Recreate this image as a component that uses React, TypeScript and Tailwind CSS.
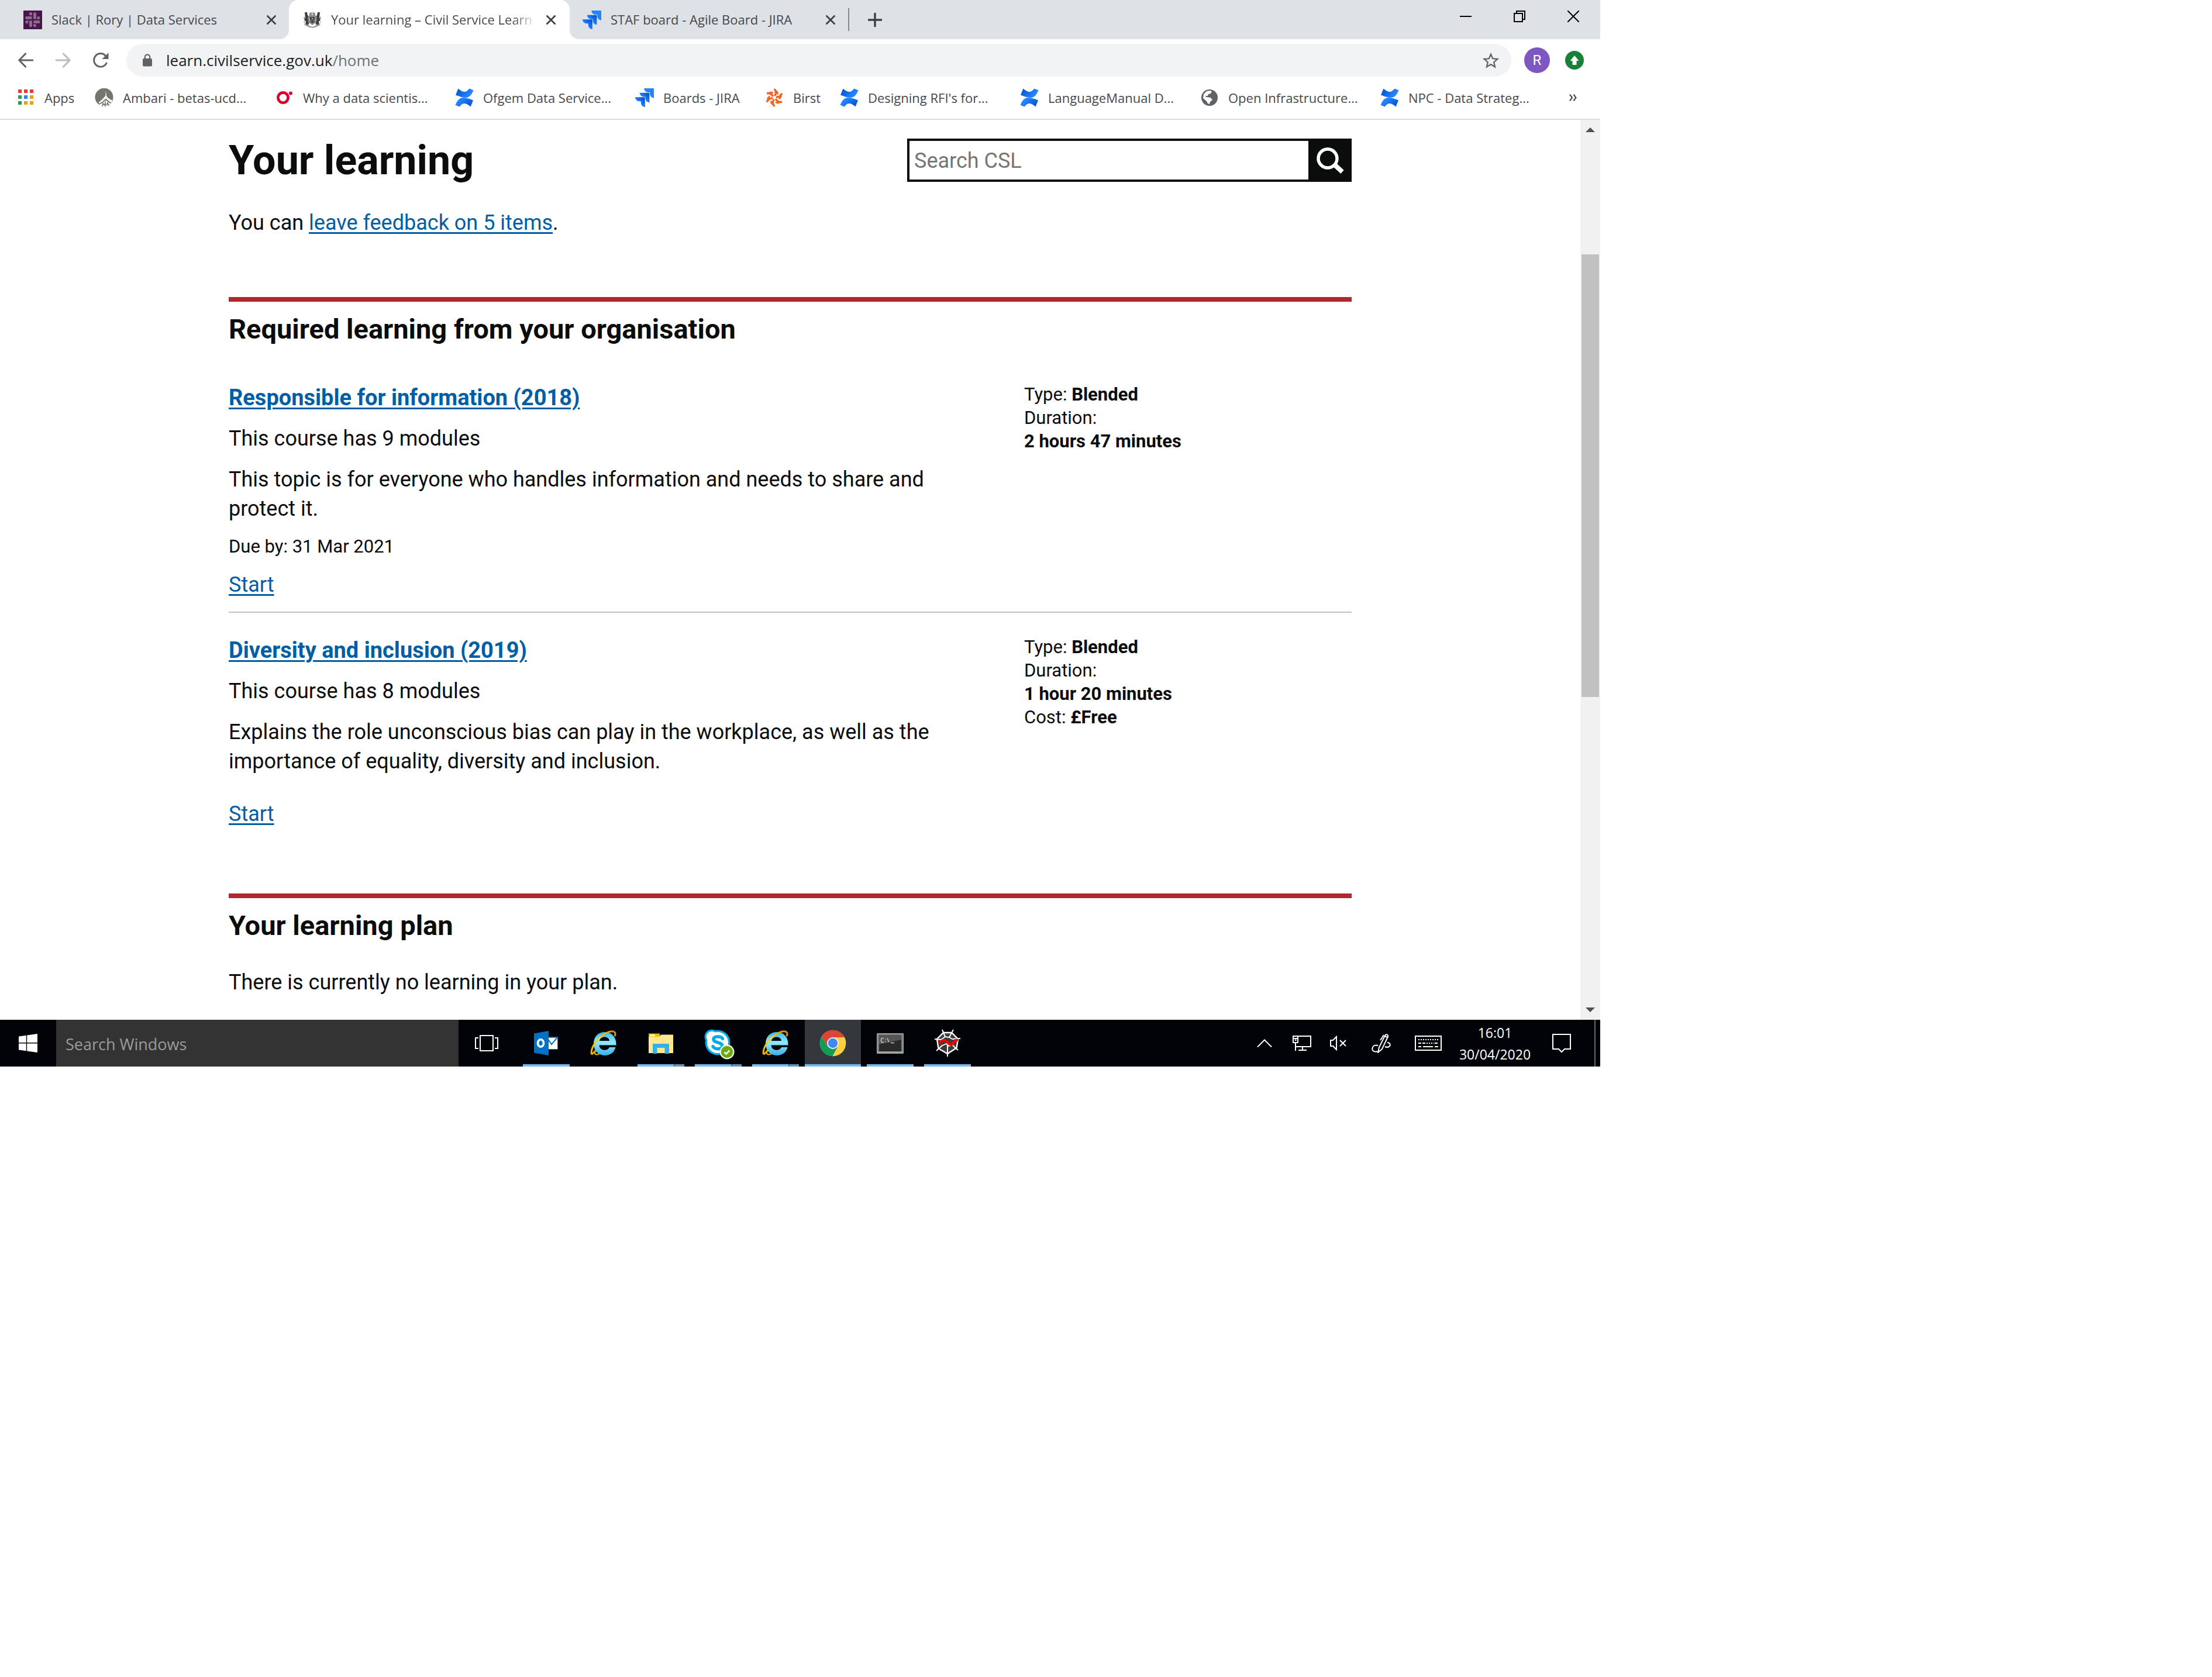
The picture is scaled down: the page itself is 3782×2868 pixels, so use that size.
import React, { useId } from "react";
import type { ReactNode } from "react";

/* ---------- favicons ---------- */

function SlackIcon() {
  return (
    <svg viewBox="0 0 32 32" className="size-8 shrink-0" aria-hidden="true">
      <rect width="32" height="32" fill="#4a154b" />
      <g fill="#8f6a90">
        <rect x="17" y="3" width="5" height="12" rx="2.4" />
        <path d="M15 8.2h-2.6a2.6 2.6 0 1 1 2.6-2.6z" />
        <rect x="3" y="10" width="12" height="5" rx="2.4" />
        <path d="M23.3 15v-2.4a2.5 2.5 0 1 1 2.5 2.4z" />
        <rect x="10" y="17" width="5" height="11.5" rx="2.4" />
        <rect x="17" y="17" width="11.500" height="5" rx="2.4" />
        <path d="M17 23.300h2.400a2.500 2.500 0 1 1-2.400 2.500z" />
        <path d="M8.500 17v2.500A2.600 2.600 0 1 1 6 17z" />
      </g>
    </svg>
  );
}

function CrestIcon() {
  return (
    <svg viewBox="0 0 32 32" className="size-8 shrink-0" aria-hidden="true">
      <g fill="#3f3f3f">
        <path d="M3 3h4l1 5 3 4v8l-2 5-5-1 1-5-3-3 2-4z" />
        <path d="M29 3h-4l-1 5-3 4v8l2 5 5-1-1-5 3-3-2-4z" />
      </g>
      <path d="M11 5l2-2 3 1 3-1 2 2v3l3 4-1 8-7 5-7-5-1-8 3-4z" fill="#8a8a8a" />
      <path d="M12 11h8v8l-4 3-4-3z" fill="#444" />
      <path d="M14.500 5h3v3h-3zM11 14h1v4h-1zM20 14h1v4h-1zM15 13h2v2h-2zM13 17h2v1h-2zM17 17h2v1h-2z" fill="#c9c9c9" />
      <path d="M2 22l7 3 7 3 7-3 7-3-1 3-6 3-7 2-7-2-6-3z" fill="#9b9b9b" />
      <path d="M1 12l2-2v5zM31 12l-2-2v5zM1 18l2 1v3zM31 18l-2 1v3z" fill="#8a8a8a" />
    </svg>
  );
}

function JiraIcon() {
  const id = useId();
  return (
    <svg viewBox="0 0 24 24" className="size-8 shrink-0" aria-hidden="true">
      <defs>
        <linearGradient id={id} x1="1" y1="0" x2="0.400" y2="0.600">
          <stop offset="0.150" stopColor="#0052cc" />
          <stop offset="1" stopColor="#2684ff" />
        </linearGradient>
      </defs>
      <path
        fill="#2684ff"
        d="M23.013 0H11.455a5.215 5.215 0 0 0 5.215 5.215h2.129v2.057A5.215 5.215 0 0 0 24 12.483V1.005A1.001 1.001 0 0 0 23.013 0Z"
      />
      <path
        fill={`url(#${id})`}
        d="M17.294 5.757H5.736a5.215 5.215 0 0 0 5.215 5.214h2.129v2.058a5.218 5.218 0 0 0 5.215 5.214V6.758a1.001 1.001 0 0 0-1.001-1.001z"
      />
      <path
        fill={`url(#${id})`}
        d="M11.571 11.513H0a5.218 5.218 0 0 0 5.232 5.215h2.130v2.057A5.215 5.215 0 0 0 12.575 24V12.518a1.005 1.005 0 0 0-1.005-1.005z"
      />
    </svg>
  );
}

function ConfluenceIcon() {
  const id = useId();
  const half = "M5.500 .5C10 4.500 13 6 16.500 6 20 6 22 3 24.500 .5L31.500 3.500C29 9 26 16 18 16 12 16 6 13.500 1 11.500Z";
  return (
    <svg viewBox="0 0 32 32" className="size-8 shrink-0" aria-hidden="true">
      <defs>
        <linearGradient id={id} x1="0" y1="0.200" x2="0.800" y2="0.600">
          <stop offset="0" stopColor="#0052cc" />
          <stop offset="1" stopColor="#2684ff" />
        </linearGradient>
      </defs>
      <path fill={`url(#${id})`} d={half} />
      <path fill={`url(#${id})`} d={half} transform="rotate(180 16 16)" />
    </svg>
  );
}

function AppsIcon() {
  const colours = ["#f6352e", "#f6352e", "#f6352e", "#2b9b52", "#1e88f7", "#f1a100", "#2b9b52", "#f1a100", "#f1a100"];
  return (
    <svg viewBox="0 0 32 32" className="size-8 shrink-0" aria-hidden="true">
      {colours.map((c, i) => (
        <rect key={i} x={3 + (i % 3) * 10} y={2 + Math.floor(i / 3) * 10} width="6" height="6" fill={c} />
      ))}
    </svg>
  );
}

function AmbariIcon() {
  return (
    <svg viewBox="0 0 32 32" className="size-8 shrink-0" aria-hidden="true">
      <path d="M8 28.500A15.500 15.500 0 1 1 23 29L31 22 19 14.500 8 24z" fill="#75756f" />
      <path d="M19 3l1 11 3 3 4 5-8-4-8 4 4-5 3-3z" fill="#f2f2ee" />
      <g fill="none" stroke="#f2f2ee" strokeWidth="2">
        <path d="M19 13c-3 5-7 8-12 12M19 13c2 4 6 7 10 8" />
      </g>
      <g fill="none" stroke="#75756f" strokeWidth="1.800">
        <path d="M8 27c4-2 8-5 11-8 3 3 6 5 9 6M13 31l1-5 3 3M18 23v8M20 29l2-4 2 5" />
      </g>
    </svg>
  );
}

function RingIcon() {
  return (
    <svg viewBox="0 0 32 32" className="size-8 shrink-0" aria-hidden="true">
      <circle cx="14" cy="16" r="8.600" fill="none" stroke="#d9002f" strokeWidth="4.600" />
      <circle cx="27" cy="8.500" r="2.900" fill="#d9002f" />
    </svg>
  );
}

function BirstIcon() {
  return (
    <svg viewBox="0 0 32 32" className="size-8 shrink-0" aria-hidden="true">
      <g fill="none" stroke="#f26322" strokeWidth="3.400">
        {[0, 60, 120, 180, 240, 300].map((a) => (
          <path key={a} d="M16.500 13C19 10 19.500 6 16 1" transform={`rotate(${a} 16 16)`} />
        ))}
        {[30, 90, 150, 210, 270, 330].map((a) => (
          <path key={a} d="M18 8.500C17 6 15 4.500 13 4.500" strokeWidth="2.600" transform={`rotate(${a} 16 16)`} />
        ))}
      </g>
    </svg>
  );
}

function GlobeIcon() {
  return (
    <svg viewBox="0 0 32 32" className="size-8 shrink-0" aria-hidden="true">
      <circle cx="16" cy="16" r="14" fill="#5f6368" />
      <path
        d="M5 17l6 5 2 4 3 1 1-4 4-3-3-4-7-1-3-2 5 0 1-3 4-1 2-4-4-1-5 1-5 5z"
        fill="#fff"
      />
      <path d="M22 7l-2 3 1 3 4 1 2 3c0-5-1-7-5-10z" fill="#5f6368" />
    </svg>
  );
}

function CloseIcon() {
  return (
    <svg viewBox="0 0 16 16" className="size-4" stroke="#3c4043" strokeWidth="2.800" aria-hidden="true">
      <path d="M.5 .5l15 15M15.500 .5l-15 15" />
    </svg>
  );
}

/* ---------- browser frame ---------- */

function Tab({ icon, title, active, className }: { icon: ReactNode; title: string; active?: boolean; className: string }) {
  return (
    <div
      role="tab"
      aria-selected={!!active}
      className={`relative flex h-full items-center gap-4 ${active ? "rounded-t-2xl bg-white" : ""} ${className}`}
    >
      {active && (
        <>
          <svg viewBox="0 0 16 16" className="absolute right-full bottom-0 size-4" aria-hidden="true">
            <path d="M16 0v16H0A16 16 0 0 0 16 0z" fill="#fff" />
          </svg>
          <svg viewBox="0 0 16 16" className="absolute bottom-0 left-full size-4" aria-hidden="true">
            <path d="M0 0v16h16A16 16 0 0 1 0 0z" fill="#fff" />
          </svg>
        </>
      )}
      {icon}
      <span
        className={`min-w-0 flex-1 overflow-hidden whitespace-nowrap ${
          active ? "[mask-image:linear-gradient(to_right,black_88%,transparent)]" : ""
        }`}
      >
        {title}
      </span>
      <button type="button" aria-label={`Close ${title}`} className="shrink-0">
        <CloseIcon />
      </button>
    </div>
  );
}

function TabStrip() {
  return (
    <div className="flex h-[67px] bg-[#dee1e6] text-[22px] text-[#45494d]">
      <div role="tablist" className="flex">
        <Tab icon={<SlackIcon />} title="Slack | Rory | Data Services" className="w-[494px] pr-[22px] pl-10" />
        <Tab icon={<CrestIcon />} title="Your learning – Civil Service Learn" active className="w-[480px] px-6" />
        <Tab icon={<JiraIcon />} title="STAF board - Agile Board - JIRA" className="w-[476px] px-[22px]" />
      </div>
      <div className="my-[14px] w-0.5 bg-[#85888d]" />
      <button type="button" aria-label="New tab" className="grid w-[88px] place-items-center">
        <svg viewBox="0 0 24 24" className="size-6" stroke="#3c4043" strokeWidth="3.400" aria-hidden="true">
          <path d="M12 0v24M0 12h24" />
        </svg>
      </button>
      <div className="ml-auto flex h-14">
        <button type="button" aria-label="Minimise" className="grid w-[92px] place-items-center">
          <svg viewBox="0 0 20 20" className="size-5" stroke="#000" strokeWidth="2" aria-hidden="true">
            <path d="M0 10h20" />
          </svg>
        </button>
        <button type="button" aria-label="Restore" className="grid w-[92px] place-items-center">
          <svg viewBox="0 0 20 20" className="size-5" fill="none" stroke="#000" strokeWidth="2" aria-hidden="true">
            <path d="M1 5h14v14H1zM5 4V1h14v14h-3" />
          </svg>
        </button>
        <button type="button" aria-label="Close window" className="grid w-[92px] place-items-center">
          <svg viewBox="0 0 20 20" className="size-5" stroke="#000" strokeWidth="2" aria-hidden="true">
            <path d="M0 0l20 20M20 0L0 20" />
          </svg>
        </button>
      </div>
    </div>
  );
}

function Toolbar() {
  return (
    <div className="flex items-center pt-2 pr-7 pl-3">
      <button type="button" aria-label="Back" className="grid w-16 place-items-center">
        <svg viewBox="0 0 26 26" className="size-[26px]" fill="none" stroke="#5f6368" strokeWidth="3" aria-hidden="true">
          <path d="M26 13H2M13.500 1L1.800 13l11.700 12" />
        </svg>
      </button>
      <button type="button" aria-label="Forward" className="grid w-16 place-items-center">
        <svg viewBox="0 0 26 26" className="size-[26px]" fill="none" stroke="#babcbe" strokeWidth="3" aria-hidden="true">
          <path d="M0 13h24M12.500 1l11.700 12-11.700 12" />
        </svg>
      </button>
      <button type="button" aria-label="Reload" className="grid w-16 place-items-center">
        <svg viewBox="0 0 28 28" className="size-7" aria-hidden="true">
          <path d="M24.500 18A11.300 11.300 0 1 1 22.500 6.500" fill="none" stroke="#5f6368" strokeWidth="3" />
          <path d="M27.500 1v11H16.500z" fill="#5f6368" />
        </svg>
      </button>
      <div className="ml-3 flex h-14 flex-1 items-center rounded-full bg-[#f1f3f4] pr-5 pl-7">
        <svg viewBox="0 0 16 22" className="h-[22px] w-4" aria-hidden="true">
          <rect y="8" width="16" height="13.500" rx="2" fill="#5f6368" />
          <path d="M3.800 9V5.500a4.200 4.200 0 0 1 8.400 0V9" fill="none" stroke="#5f6368" strokeWidth="2.200" />
        </svg>
        <div className="ml-6 flex-1 text-[26px] text-[#202124]">
          learn.civilservice.gov.uk<span className="text-[#6d7175]">/home</span>
        </div>
        <button type="button" aria-label="Bookmark this page" className="grid size-8 place-items-center">
          <svg viewBox="0 0 24 24" className="size-[34px]" aria-hidden="true">
            <path
              fill="#5f6368"
              d="M22 9.240l-7.190-.620L12 2 9.190 8.630 2 9.240l5.460 4.730L5.820 21 12 17.270 18.180 21l-1.630-7.030L22 9.240zM12 15.400l-3.760 2.270 1-4.280-3.320-2.880 4.380-.380L12 6.100l1.710 4.040 4.380.380-3.320 2.880 1 4.280L12 15.400z"
            />
          </svg>
        </button>
      </div>
      <button
        type="button"
        aria-label="Profile"
        className="ml-[22px] grid size-11 place-items-center rounded-full bg-[#7e57c2] font-['Roboto',sans-serif] text-[24px] text-white"
      >
        R
      </button>
      <button type="button" aria-label="Update" className="ml-[26px] grid size-8 place-items-center rounded-full bg-[#188038]">
        <svg viewBox="0 0 16 16" className="size-4" fill="#fff" aria-hidden="true">
          <path d="M8 0l7.500 9H11.500v7h-7V9H.5z" />
        </svg>
      </button>
    </div>
  );
}

const bookmarks: { label: string; icon: ReactNode; width: string }[] = [
  { label: "Apps", icon: <AppsIcon />, width: "w-[134px]" },
  { label: "Ambari - betas-ucd...", icon: <AmbariIcon />, width: "w-[308px]" },
  { label: "Why a data scientis...", icon: <RingIcon />, width: "w-[308px]" },
  { label: "Ofgem Data Service...", icon: <ConfluenceIcon />, width: "w-[308px]" },
  { label: "Boards - JIRA", icon: <JiraIcon />, width: "w-[222px]" },
  { label: "Birst", icon: <BirstIcon />, width: "w-[128px]" },
  { label: "Designing RFI's for...", icon: <ConfluenceIcon />, width: "w-[308px]" },
  { label: "LanguageManual D...", icon: <ConfluenceIcon />, width: "w-[308px]" },
  { label: "Open Infrastructure...", icon: <GlobeIcon />, width: "w-[308px]" },
  { label: "NPC - Data Strateg...", icon: <ConfluenceIcon />, width: "w-[308px]" },
];

function BookmarksBar() {
  return (
    <nav aria-label="Bookmarks" className="flex h-[74px] items-center border-b-2 border-[#dadce0] pr-10 pl-7 text-[22px] text-[#45494d]">
      {bookmarks.map((b) => (
        <a key={b.label} href="#" className={`flex shrink-0 items-center gap-4 whitespace-nowrap ${b.width}`}>
          {b.icon}
          {b.label}
        </a>
      ))}
      <button type="button" aria-label="More bookmarks" className="ml-auto">
        <svg viewBox="0 0 13 12" className="h-3 w-[13px]" fill="none" stroke="#4a4e52" strokeWidth="2.200" aria-hidden="true">
          <path d="M1 .5L5 6l-4 5.500M7.500 .5l4 5.500-4 5.500" />
        </svg>
      </button>
    </nav>
  );
}

/* ---------- page ---------- */

const linkClass = "text-[#005ea5] underline decoration-[3px] underline-offset-[4px]";

function SectionHeading({ children }: { children: ReactNode }) {
  return (
    <h2 className="border-t-8 border-[#b0272d] pt-[17px] text-[47px] leading-[60px] font-bold">{children}</h2>
  );
}

interface Course {
  title: string;
  modules: string;
  summary: string;
  due?: string;
  duration: string;
  cost?: string;
}

const courses: Course[] = [
  {
    title: "Responsible for information (2018)",
    modules: "This course has 9 modules",
    summary: "This topic is for everyone who handles information and needs to share and protect it.",
    due: "Due by: 31 Mar 2021",
    duration: "2 hours 47 minutes",
  },
  {
    title: "Diversity and inclusion (2019)",
    modules: "This course has 8 modules",
    summary:
      "Explains the role unconscious bias can play in the workplace, as well as the importance of equality, diversity and inclusion.",
    duration: "1 hour 20 minutes",
    cost: "£Free",
  },
];

function Strong({ children }: { children: ReactNode }) {
  return <strong className="leading-none font-bold">{children}</strong>;
}

function CourseItem({ course }: { course: Course }) {
  return (
    <li className="grid grid-cols-[17fr_7fr] border-b-2 border-[#bfc1c3] pt-[39px] pb-[21px] first:pt-0 last:border-0 last:pb-0">
      <div className="flex flex-col items-start gap-5 pr-[90px]">
        <h3 className="text-[38px] font-bold">
          <a href="#" className={linkClass}>
            {course.title}
          </a>
        </h3>
        <p>{course.modules}</p>
        <p>{course.summary}</p>
        {course.due ? <p className="text-[31px] leading-10">{course.due}</p> : <div className="h-0" />}
        <a href="#" className={linkClass}>
          Start
        </a>
      </div>
      <dl className="text-[31px] leading-10">
        <div>
          <dt className="inline">Type: </dt>
          <dd className="inline">
            <Strong>Blended</Strong>
          </dd>
        </div>
        <dt>Duration:</dt>
        <dd>
          <Strong>{course.duration}</Strong>
        </dd>
        {course.cost && (
          <div>
            <dt className="inline">Cost: </dt>
            <dd className="inline">
              <Strong>{course.cost}</Strong>
            </dd>
          </div>
        )}
      </dl>
    </li>
  );
}

function LearningPage() {
  return (
    <main className="min-w-0 flex-1 font-['Roboto',sans-serif] text-[36px] leading-[50px] text-[#0b0c0c]">
      <div className="mx-auto max-w-[1920px] pt-[29px] pb-[39px]">
        <div className="flex items-center justify-between">
          <h1 className="text-[70px] leading-[80px] font-bold">Your learning</h1>
          <form className="flex h-[74px] w-[760px]" onSubmit={(e) => e.preventDefault()}>
            <input
              type="search"
              aria-label="Search CSL"
              placeholder="Search CSL"
              className="min-w-0 flex-1 border-4 border-r-0 border-[#0b0c0c] bg-white px-2 pt-0.5 outline-none placeholder:text-[#757575] placeholder:opacity-100"
            />
            <button type="submit" aria-label="Search" className="grid w-[74px] place-items-center bg-[#0b0c0c]">
              <svg viewBox="0 0 48 46" className="h-[46px] w-12" fill="none" stroke="#fff" aria-hidden="true">
                <circle cx="20" cy="20" r="16" strokeWidth="5.500" />
                <path d="M31 30l14 13" strokeWidth="8" />
              </svg>
            </button>
          </form>
        </div>
        <p className="mt-[42px]">
          You can{" "}
          <a href="#" className={linkClass}>
            leave feedback on 5 items
          </a>
          .
        </p>
        <section className="mt-[102px]">
          <SectionHeading>Required learning from your organisation</SectionHeading>
          <ul className="mt-[62px]">
            {courses.map((c) => (
              <CourseItem key={c.title} course={c} />
            ))}
          </ul>
        </section>
        <section className="mt-[111px]">
          <SectionHeading>Your learning plan</SectionHeading>
          <p className="mt-[42px]">There is currently no learning in your plan.</p>
        </section>
      </div>
    </main>
  );
}

function ScrollBar() {
  return (
    <div className="flex w-[34px] flex-col bg-[#f1f1f1] px-0.5" aria-hidden="true">
      <div className="grid h-[34px] place-items-center">
        <svg viewBox="0 0 16 8" className="h-2 w-4" fill="#505050">
          <path d="M8 0l8 8H0z" />
        </svg>
      </div>
      <div className="flex-[196]" />
      <div className="flex-[757] bg-[#c1c1c1]" />
      <div className="flex-[518]" />
      <div className="grid h-[34px] place-items-center">
        <svg viewBox="0 0 16 8" className="h-2 w-4" fill="#505050">
          <path d="M8 8l8-8H0z" />
        </svg>
      </div>
    </div>
  );
}

/* ---------- taskbar ---------- */

function OutlookIcon() {
  return (
    <svg viewBox="0 0 48 48" className="size-12" aria-hidden="true">
      <rect x="24" y="13" width="20" height="22" fill="#0072c6" />
      <path d="M26 15h17v19H26z" fill="#fff" />
      <path d="M26 16l7 10 10-12" fill="none" stroke="#0072c6" strokeWidth="2" />
      <path d="M3 7.500L28 3v42L3 40.500z" fill="#0072c6" />
      <ellipse cx="14.500" cy="24" rx="5" ry="6.200" fill="none" stroke="#fff" strokeWidth="3.600" />
    </svg>
  );
}

function ExplorerEIcon() {
  const id = useId();
  return (
    <svg viewBox="0 0 48 48" className="size-12" aria-hidden="true">
      <defs>
        <linearGradient id={id} x1="0" y1="0" x2="0" y2="1">
          <stop offset="0" stopColor="#3fb4e8" />
          <stop offset="0.450" stopColor="#8eeafd" />
          <stop offset="1" stopColor="#3aaee6" />
        </linearGradient>
        <linearGradient id={`${id}g`} x1="0" y1="1" x2="1" y2="0">
          <stop offset="0" stopColor="#e8b400" />
          <stop offset="0.500" stopColor="#ffd21e" />
          <stop offset="1" stopColor="#c99000" />
        </linearGradient>
      </defs>
      <path
        fill={`url(#${id})`}
        fillRule="evenodd"
        d="M26 5C14.500 5 7 13.500 7 25s8 20 19 20c9.500 0 16.500-5.500 18.500-14H34c-1.500 3-4 4.800-8 4.800-5.500 0-9-3-9.500-8.300H45.500C46 14 38.500 5 26 5zM17 20c1-4 4-6.500 8.700-6.500S33.500 16 34 20z"
      />
      <path
        d="M10 37C4 44 2 45 3.500 36.500 5.500 27 15 14 27 7.500 38 1.500 46 3 43.500 11"
        fill="none"
        stroke={`url(#${id}g)`}
        strokeWidth="3"
        strokeLinecap="round"
      />
      <path d="M10 37C7 43 11 45 17 42" fill="none" stroke="#d9a300" strokeWidth="2.400" />
    </svg>
  );
}

function FolderIcon() {
  return (
    <svg viewBox="0 0 48 48" className="size-12" aria-hidden="true">
      <path d="M3 7.500h19V14H3z" fill="#f5b800" />
      <path d="M3 13h18l3-3.500h21V41H3z" fill="#ffe793" />
      <rect x="5" y="9.500" width="9" height="2.600" fill="#fff" />
      <path d="M10 25h28v17h-7.500V32h-13v10H10z" fill="#35b0e8" />
    </svg>
  );
}

function SkypeIcon() {
  return (
    <svg viewBox="0 0 56 56" className="size-14" aria-hidden="true">
      <g fill="#00a9ec">
        <circle cx="27" cy="27" r="21.500" />
        <circle cx="17" cy="17" r="12.500" />
        <circle cx="36" cy="36" r="12" />
      </g>
      <g fill="#fff">
        <circle cx="27" cy="27" r="18" />
        <circle cx="17" cy="17" r="9.300" />
      </g>
      <path
        d="M35.500 20.500c-2-4.500-15-5.500-15.500.8-.300 6.700 15.500 4.500 15 11.700-.500 6.500-13.500 6-16 .5"
        fill="none"
        stroke="#00a9ec"
        strokeWidth="5.400"
        strokeLinecap="round"
      />
      <circle cx="43" cy="43" r="12.500" fill="#f4f8ec" />
      <circle cx="43" cy="43" r="10.200" fill="#6bab0b" />
      <path d="M38.500 43.500l3.200 3 5.500-6" fill="none" stroke="#fff" strokeWidth="2.600" />
    </svg>
  );
}

function ChromeIcon() {
  return (
    <svg viewBox="0 0 48 48" className="size-12" aria-hidden="true">
      <circle cx="24" cy="24" r="22.300" fill="#ffcd40" />
      <path d="M4.700 12.850A22.300 22.300 0 0 1 43.500 13.200L44 14H24L15 29.200z" fill="#db4437" />
      <path d="M4.700 12.850A22.300 22.300 0 0 0 24 46.300l9-17.300L24 34l-9.200-5.300z" fill="#0f9d58" />
      <path d="M24 14h19.900l.700 2A22.300 22.300 0 0 1 23.500 46.300l9.200-17.100z" fill="#ffcd40" />
      <circle cx="24" cy="24" r="10" fill="#f4f4f4" />
      <circle cx="24" cy="24" r="8.200" fill="#4285f4" />
    </svg>
  );
}

function TerminalIcon() {
  return (
    <svg viewBox="0 0 48 48" className="size-12" aria-hidden="true">
      <rect x="1" y="7" width="46" height="35" rx="1.500" fill="#a4a4a4" />
      <rect x="2.500" y="8.500" width="43" height="30" fill="#7c7c7c" />
      <rect x="5" y="10" width="38" height="28" fill="#2a2a2a" />
      <path d="M5 10h38v8L5 26z" fill="#555" />
      <path
        d="M13 15.500h-3l-1.500 1.500v4l1.500 1.500h3M16 17v1M16 21v1M19 15.500l3 7M25 23.500h6"
        fill="none"
        stroke="#c8c8c8"
        strokeWidth="1.400"
      />
      <rect x="38" y="39.500" width="3" height="1.500" fill="#3fb8e8" />
    </svg>
  );
}

function SpiderIcon() {
  return (
    <svg viewBox="0 0 48 48" className="size-12" aria-hidden="true">
      <path d="M17 6h15L42 18l-2.500 13L24 41 8.500 31 6 18z" fill="#3b3b3b" />
      <g fill="none" stroke="#fff" strokeWidth="2">
        <path d="M17 6h14L42 17l-2.500 15L24 42 8.500 33 6 17z" strokeWidth="2.400" />
        <path d="M20 13l7 1 5 3M13 18l7-5M13 29l9-4 4 4 9-3" strokeWidth="1.800" />
        <path d="M27 14L34 1M20 13L15 1M32 17l14-1M13 18L2 17M32 27l10 9M15 28L5 37M24 27v20" />
      </g>
      <path d="M9 25C14 19 19 17 24 22c5 6 8 6 10 1 2-3.500 4-5 8-4" fill="none" stroke="#f00000" strokeWidth="4.400" />
    </svg>
  );
}

type Underline = "none" | "single" | "stacked" | "full";

const apps: { name: string; icon: ReactNode; underline: Underline }[] = [
  { name: "Outlook", icon: <OutlookIcon />, underline: "single" },
  { name: "Internet Explorer", icon: <ExplorerEIcon />, underline: "none" },
  { name: "File Explorer", icon: <FolderIcon />, underline: "stacked" },
  { name: "Skype for Business", icon: <SkypeIcon />, underline: "stacked" },
  { name: "Internet Explorer windows", icon: <ExplorerEIcon />, underline: "stacked" },
  { name: "Google Chrome", icon: <ChromeIcon />, underline: "full" },
  { name: "Command Prompt", icon: <TerminalIcon />, underline: "single" },
  { name: "Spyder", icon: <SpiderIcon />, underline: "single" },
];

function AppButton({ name, icon, underline }: { name: string; icon: ReactNode; underline: Underline }) {
  return (
    <button
      type="button"
      aria-label={name}
      className={`relative grid w-24 place-items-center ${underline === "full" ? "bg-[#34373c]" : ""}`}
    >
      {icon}
      {underline === "full" && <span className="absolute inset-x-0 bottom-0 h-1 bg-[#76b9ed]" />}
      {underline === "single" && <span className="absolute inset-x-2 bottom-0 h-1 bg-[#76b9ed]" />}
      {underline === "stacked" && (
        <span className="absolute inset-x-2 bottom-0 flex h-1">
          <span className="flex-1 bg-[#76b9ed]" />
          <span className="w-0.5 bg-[#466f8e]" />
          <span className="w-4 bg-[#5e94be]" />
        </span>
      )}
    </button>
  );
}

function Tray() {
  return (
    <div className="ml-auto flex text-white">
      <button type="button" aria-label="Show hidden icons" className="grid w-16 place-items-center">
        <svg viewBox="0 0 26 14" className="h-[14px] w-[26px]" fill="none" stroke="#fff" strokeWidth="2" aria-hidden="true">
          <path d="M1 13.500L13 1.500l12 12" />
        </svg>
      </button>
      <button type="button" aria-label="Network" className="grid w-16 place-items-center">
        <svg viewBox="0 0 32 28" className="h-7 w-8" fill="none" stroke="#fff" strokeWidth="2" aria-hidden="true">
          <path d="M9 2h22v18H6M17 20v6M10 26h14M5 13v14M1 2h8v11H1zM1 6h8" />
          <path d="M4 7.500h2.500V10H4z" fill="#fff" stroke="none" />
        </svg>
      </button>
      <button type="button" aria-label="Muted" className="grid w-[60px] place-items-center">
        <svg viewBox="0 0 30 26" className="h-[26px] w-[30px]" fill="none" stroke="#fff" strokeWidth="2" aria-hidden="true">
          <path d="M2 8h4l6-6v22l-6-6H2zM18 8l10 10M28 8L18 18" />
        </svg>
      </button>
      <button type="button" aria-label="Ink workspace" className="grid w-[88px] place-items-center">
        <svg viewBox="0 0 34 34" className="size-[34px]" fill="none" stroke="#fff" strokeWidth="2" aria-hidden="true">
          <path d="M11 33l2-9L23 4c1.500-3 6-2 5 2L18 27zM23 5l4 2M21 3l-6 9M10 31C3 33 0 29 2 24c1-3 5-4 9-3M27 16c5 0 6 5 3 7-2 1-5 1-7 0" />
        </svg>
      </button>
      <button type="button" aria-label="Touch keyboard" className="grid w-[72px] place-items-center">
        <svg viewBox="0 0 46 28" className="h-7 w-[46px]" fill="none" stroke="#fff" strokeWidth="2" aria-hidden="true">
          <path d="M1 2h44v24H1z" />
          <path d="M6 8h34" strokeDasharray="2 2" />
          <path d="M6 14h5M13 14h20M34 14h6" strokeDasharray="5 2 2 2 2 2 2 2 2 2 2 2 2 7" />
          <path d="M6 20h5M14 20h17M34 20h6" />
        </svg>
      </button>
      <button type="button" className="w-[156px] self-center pt-0.5 text-center text-[23px] leading-[37px]">
        <span className="block">16:01</span>
        <span className="block">30/04/2020</span>
      </button>
      <button type="button" aria-label="Notifications" className="grid w-[72px] place-items-center">
        <svg viewBox="0 0 32 34" className="h-[34px] w-8" fill="none" stroke="#fff" strokeWidth="2" aria-hidden="true">
          <path d="M1 2h30v25H21l-5 5-5-5H1z" />
        </svg>
      </button>
      <div className="mr-2 ml-5 w-0.5 bg-[#676869]" />
    </div>
  );
}

function Taskbar() {
  return (
    <footer className="flex h-20 bg-[#010308]">
      <button type="button" aria-label="Start" className="grid w-24 place-items-center">
        <svg viewBox="0 0 32 32" className="size-8" fill="#fff" aria-hidden="true">
          <path d="M0 4.600L12.800 2.700V15H0zM14.200 2.500L32 0v15H14.200zM0 16.600h12.800v12.600L0 27.400zM14.200 16.600H32V32l-17.800-2.500z" />
        </svg>
      </button>
      <input
        type="text"
        aria-label="Search Windows"
        placeholder="Search Windows"
        className="w-[688px] min-w-0 bg-[#333333] px-4 pt-1 text-[27px] text-white outline-none placeholder:text-[#9b9b9b] placeholder:opacity-100"
      />
      <button type="button" aria-label="Task view" className="grid w-24 place-items-center">
        <svg viewBox="0 0 40 28" className="h-7 w-10" fill="none" stroke="#fff" strokeWidth="2" aria-hidden="true">
          <path d="M9 1h22v26H9zM6 5H1v18h5M34 5h5v18h-5" />
        </svg>
      </button>
      <div className="ml-1.5 flex gap-0.5">
        {apps.map((a) => (
          <AppButton key={a.name} {...a} />
        ))}
      </div>
      <Tray />
    </footer>
  );
}

export default function App() {
  return (
    <div className="min-h-screen bg-white">
      <div className="w-full max-w-[2736px] font-['Open_Sans',sans-serif]">
        <header>
          <TabStrip />
          <Toolbar />
          <BookmarksBar />
        </header>
        <div className="flex">
          <LearningPage />
          <ScrollBar />
        </div>
        <Taskbar />
      </div>
    </div>
  );
}
